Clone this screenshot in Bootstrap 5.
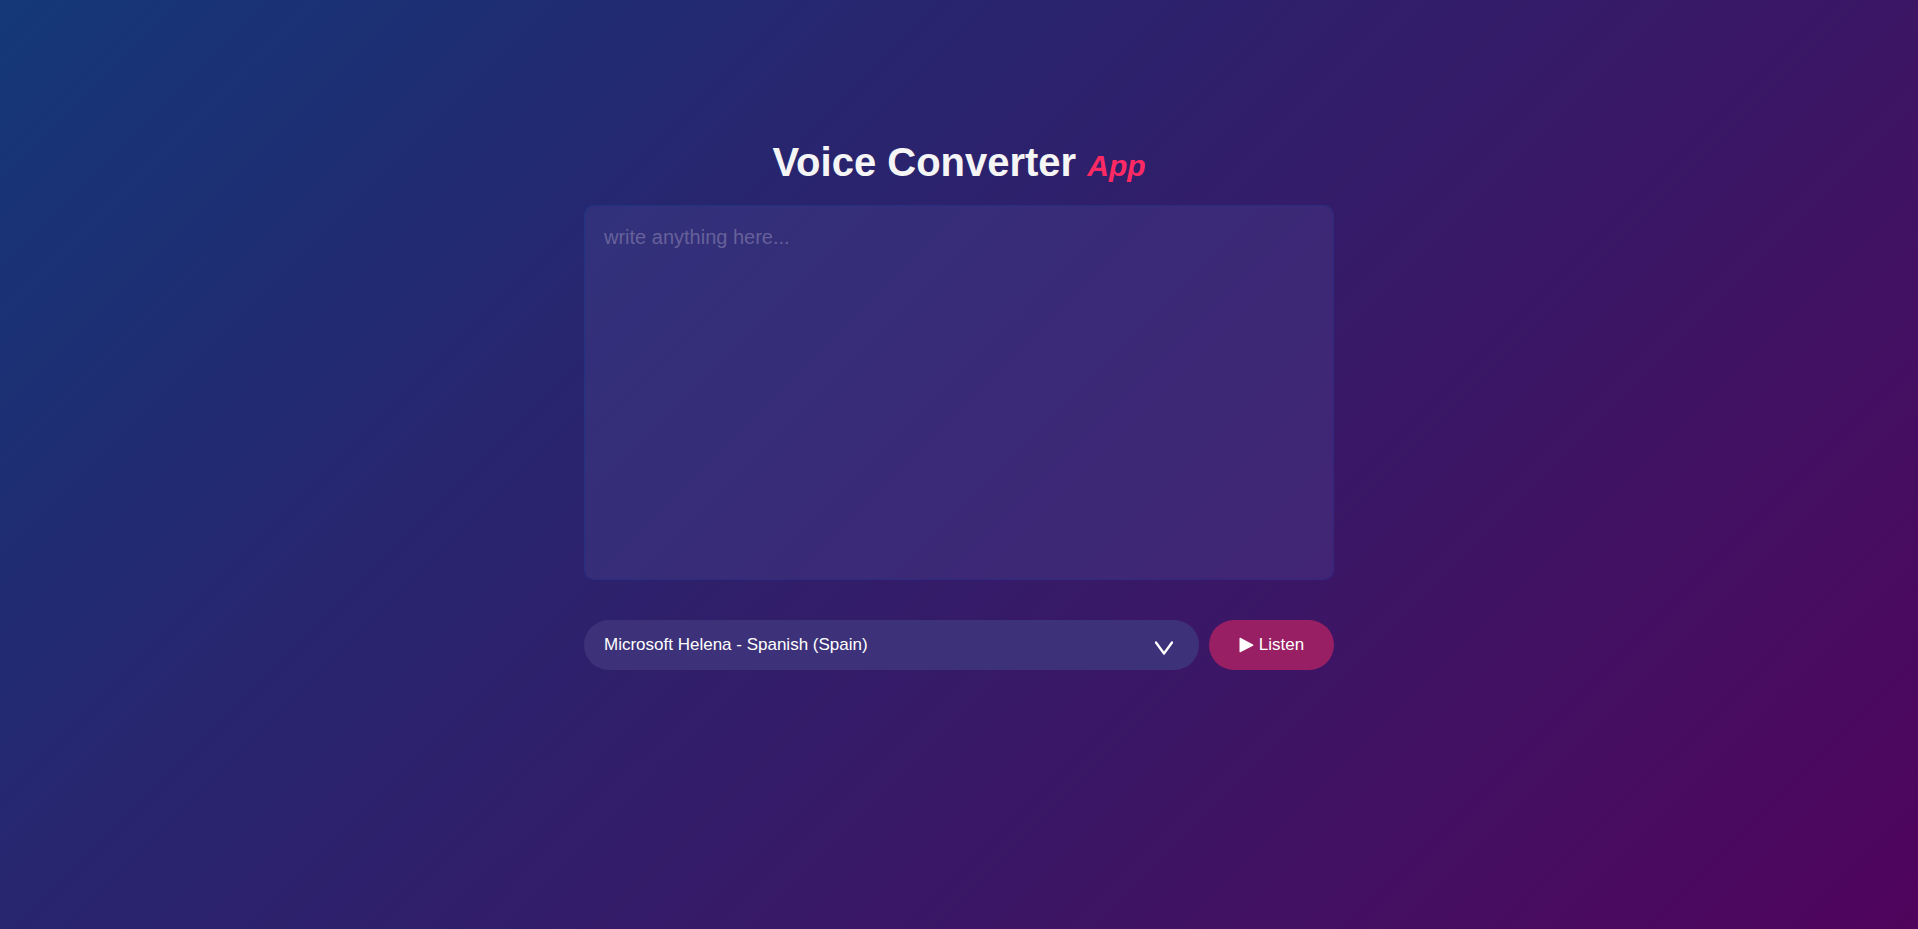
<!DOCTYPE html>
<html lang="en">
<head>
<meta charset="utf-8">
<meta name="viewport" content="width=device-width, initial-scale=1">
<title>Voice Converter App</title>
<link href="https://cdn.jsdelivr.net/npm/bootstrap@5.3.0/dist/css/bootstrap.min.css" rel="stylesheet">
<style>
  html { height: 100%; background: linear-gradient(135deg, #143878, #29246e 35%, #3c1666 67%, #50045c) fixed; }
  body {
    background: transparent;
    font-family: "Liberation Sans", Arial, sans-serif;
  }
  .converter { max-width: 774px; padding-top: 138px; }
  .app-title { font-size: 40px; line-height: 48px; color: #f5f5f5; margin-bottom: 19px; }
  .app-title em { font-size: 30px; line-height: 1; color: #ff2963; }
  .message, .message:focus {
    height: 375px;
    padding: 19px;
    font-size: 20px;
    line-height: 24px;
    color: #fff;
    background-color: rgba(78, 74, 150, .3);
    border: 1px solid rgba(30, 80, 180, .3);
    border-radius: 10px;
    resize: none;
  }
  .message::placeholder { color: #67619b; opacity: 1; }
  .controls { gap: 10px; margin-top: 40px; }
  .voice, .voice:focus {
    height: 50px;
    padding: 0 60px 0 20px;
    font-size: 17px;
    color: #fff;
    background-color: #3d327a;
    border: 0;
    border-radius: 50px;
    background-image: url("data:image/svg+xml,%3Csvg xmlns='http://www.w3.org/2000/svg' viewBox='0 0 20 16'%3E%3Cpath d='M2 2.5 10 13.5 18 2.5' fill='none' stroke='%23fff' stroke-width='2.3' stroke-linecap='round' stroke-linejoin='round'/%3E%3C/svg%3E");
    background-size: 20px 16px;
    background-position: right 25px top 20px;
  }
  .listen, .listen:hover {
    width: 125px;
    height: 50px;
    gap: 5px;
    font-size: 17px;
    color: #fff;
    background-color: #981f63;
    border: 0;
    border-radius: 50px;
  }
</style>
</head>
<body>
<main class="converter container">
  <h1 class="app-title text-center fw-bold">Voice Converter <em>App</em></h1>
  <form>
    <textarea class="message form-control shadow-none" aria-label="Text to read aloud" placeholder="write anything here..."></textarea>
    <div class="controls d-flex">
      <select class="voice form-select shadow-none flex-fill" aria-label="Voice">
        <option>Microsoft Helena - Spanish (Spain)</option>
      </select>
      <button type="button" class="listen btn d-flex align-items-center justify-content-center flex-shrink-0 p-0">
        <svg width="15" height="16" viewBox="0 0 15 16" aria-hidden="true"><path d="M.5 1.2v13.6c0 .5.5.7.9.4L14 8.700c.5-.3.5-1 0-1.300L1.400.800C1 .500.500.700.500 1.200z" fill="#fff"/></svg>
        <span>Listen</span>
      </button>
    </div>
  </form>
</main>
<script src="https://cdn.jsdelivr.net/npm/bootstrap@5.3.0/dist/js/bootstrap.bundle.min.js"></script>
</body>
</html>
